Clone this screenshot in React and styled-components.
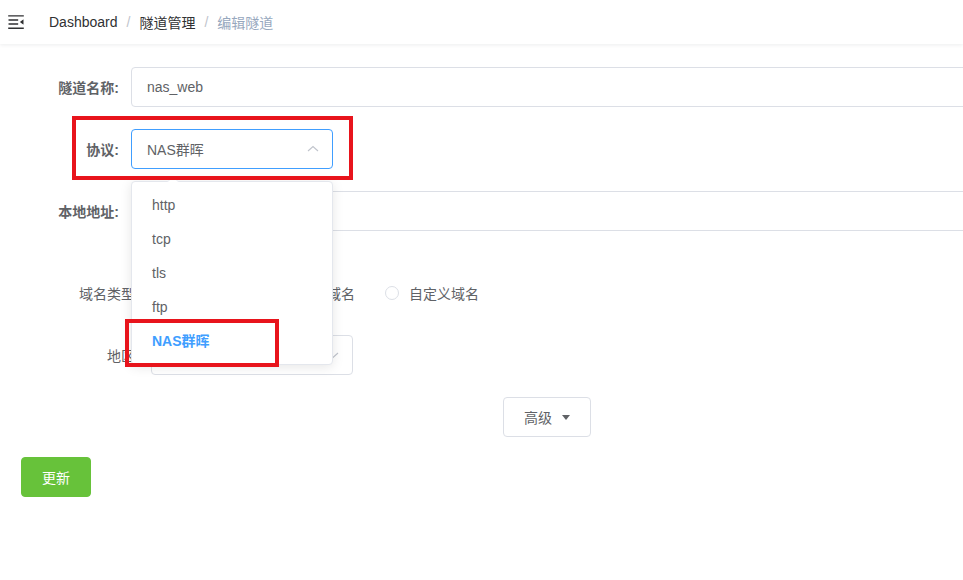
import React from 'react'
import styled, { createGlobalStyle } from 'styled-components'

const GlobalStyle = createGlobalStyle`
  html, body {
    margin: 0;
    padding: 0;
    background: #fff;
    overflow: hidden;
  }
  body {
    font-family: "Liberation Sans", "Noto Sans CJK SC", sans-serif;
    font-size: 14px;
    color: #606266;
  }
`

const Page = styled.div`
  position: relative;
  width: 963px;
  height: 580px;
  overflow: hidden;
`

const Navbar = styled.div`
  height: 44px;
  display: flex;
  align-items: center;
  background: #fff;
  box-shadow: 0 1px 4px rgba(0, 21, 41, 0.08);
`

const Hamburger = styled.svg`
  width: 20px;
  height: 20px;
  margin-left: 6px;
  transform: rotate(180deg);
`

const Breadcrumb = styled.div`
  display: flex;
  align-items: center;
  margin-left: 23px;
  font-size: 14px;
`

const Crumb = styled.span`
  color: ${p => (p.$last ? '#97a8be' : '#303133')};
`

const Sep = styled.span`
  margin: 0 9px;
  color: #c0c4cc;
`

const Form = styled.div`
  padding: 23px 0 0 11px;
`

const Item = styled.div`
  display: flex;
  align-items: center;
  height: 40px;
  margin-bottom: ${p => p.$mb ?? 22}px;
  margin-top: ${p => p.$mt ?? 0}px;
`

const Label = styled.label`
  width: ${p => p.$w ?? 120}px;
  box-sizing: border-box;
  padding-right: 12px;
  text-align: right;
  color: #606266;
  font-weight: ${p => (p.$plain ? 400 : 700)};
  flex-shrink: 0;
`

const Input = styled.div`
  box-sizing: border-box;
  height: 40px;
  width: ${p => p.$w ?? 860}px;
  flex-shrink: 0;
  border: 1px solid ${p => (p.$focus ? '#409eff' : '#dcdfe6')};
  border-radius: 4px;
  padding: 0 15px;
  display: flex;
  align-items: center;
  justify-content: space-between;
  color: #606266;
  background: #fff;
`

const SelectWrap = styled.div`
  position: relative;
`

const Chevron = styled.svg`
  width: 12px;
  height: 12px;
  margin-right: -2px;
`

const Dropdown = styled.ul`
  position: absolute;
  left: 0;
  top: 52px;
  width: 202px;
  box-sizing: border-box;
  margin: 0;
  padding: 6px 0;
  list-style: none;
  background: #fff;
  border: 1px solid #e4e7ed;
  border-radius: 4px;
  box-shadow: 0 2px 12px rgba(0, 0, 0, 0.1);
  z-index: 10;

  &::before {
    content: '';
    position: absolute;
    top: -6px;
    left: 35px;
    border: 6px solid transparent;
    border-top: 0;
    border-bottom-color: #ebeef5;
  }
  &::after {
    content: '';
    position: absolute;
    top: -5px;
    left: 36px;
    border: 5px solid transparent;
    border-top: 0;
    border-bottom-color: #fff;
  }
`

const Option = styled.li`
  height: 34px;
  line-height: 34px;
  padding: 0 20px;
  color: ${p => (p.$selected ? '#409eff' : '#606266')};
  font-weight: ${p => (p.$selected ? 700 : 400)};
`

const RadioGroup = styled.div`
  display: flex;
  align-items: center;
`

const Radio = styled.span`
  display: flex;
  align-items: center;
  margin-right: 30px;
  color: #606266;

  &::before {
    content: '';
    box-sizing: border-box;
    width: 14px;
    height: 14px;
    border-radius: 50%;
    border: ${p => (p.$checked ? '4px solid #409eff' : '1px solid #dcdfe6')};
    margin-right: 10px;
  }
`

const Center = styled.div`
  width: 832px;
  margin-left: 120px;
  display: flex;
  justify-content: center;
  margin-bottom: 20px;
`

const Button = styled.button`
  box-sizing: border-box;
  height: 40px;
  padding: 0 20px;
  border-radius: 4px;
  font-family: inherit;
  font-size: 14px;
  display: flex;
  align-items: center;
  gap: 6px;
  border: 1px solid ${p => (p.$primary ? '#67c23a' : '#dcdfe6')};
  background: ${p => (p.$primary ? '#67c23a' : '#fff')};
  color: ${p => (p.$primary ? '#fff' : '#606266')};
`

const Caret = styled.span`
  width: 0;
  height: 0;
  border-left: 4px solid transparent;
  border-right: 4px solid transparent;
  border-top: 5px solid #606266;
  margin-left: 4px;
`

const Actions = styled.div`
  padding-left: 10px;
`

const Mark = styled.div`
  position: absolute;
  left: ${p => p.$x}px;
  top: ${p => p.$y}px;
  width: ${p => p.$w}px;
  height: ${p => p.$h}px;
  box-sizing: border-box;
  border: 4px solid #e8141c;
  z-index: 20;
  pointer-events: none;
`

const options = ['http', 'tcp', 'tls', 'ftp', 'NAS群晖']

export default function App() {
  return (
    <Page>
      <GlobalStyle />
      <Navbar>
        <Hamburger viewBox="0 0 1024 1024">
          <path
            fill="#303133"
            d="M408 442h480c4.4 0 8-3.6 8-8v-56c0-4.4-3.6-8-8-8H408c-4.4 0-8 3.6-8 8v56c0 4.4 3.6 8 8 8zm-8 204c0 4.4 3.6 8 8 8h480c4.4 0 8-3.6 8-8v-56c0-4.4-3.6-8-8-8H408c-4.4 0-8 3.6-8 8v56zm504-486H120c-4.4 0-8 3.6-8 8v56c0 4.4 3.6 8 8 8h784c4.4 0 8-3.6 8-8v-56c0-4.4-3.6-8-8-8zm0 632H120c-4.4 0-8 3.6-8 8v56c0 4.4 3.6 8 8 8h784c4.4 0 8-3.6 8-8v-56c0-4.4-3.6-8-8-8zM142.4 642.1L298.7 519a8.84 8.84 0 0 0 0-13.9L142.4 381.9c-5.8-4.6-14.4-.5-14.4 6.9v246.3a8.8 8.8 0 0 0 14.4 7z"
          />
        </Hamburger>
        <Breadcrumb>
          <Crumb>Dashboard</Crumb>
          <Sep>/</Sep>
          <Crumb>隧道管理</Crumb>
          <Sep>/</Sep>
          <Crumb $last>编辑隧道</Crumb>
        </Breadcrumb>
      </Navbar>

      <Form>
        <Item>
          <Label>隧道名称:</Label>
          <Input>nas_web</Input>
        </Item>
        <Item>
          <Label>协议:</Label>
          <SelectWrap>
            <Input $w={202} $focus>
              NAS群晖
              <Chevron viewBox="0 0 12 12">
                <polyline points="1,8 6,3.5 11,8" fill="none" stroke="#c0c4cc" strokeWidth="1.1" />
              </Chevron>
            </Input>
            <Dropdown>
              {options.map(o => (
                <Option key={o} $selected={o === 'NAS群晖'}>{o}</Option>
              ))}
            </Dropdown>
          </SelectWrap>
        </Item>
        <Item $mb={42}>
          <Label>本地地址:</Label>
          <Input />
        </Item>
        <Item>
          <Label $w={140} $plain>域名类型:</Label>
          <RadioGroup>
            <Radio $checked>随机域名</Radio>
            <Radio>指定子域名</Radio>
            <Radio>自定义域名</Radio>
          </RadioGroup>
        </Item>
        <Item>
          <Label $w={140} $plain>地区:</Label>
          <Input $w={202}>
            <span />
            <Chevron viewBox="0 0 12 12">
              <polyline points="1,4 6,8.5 11,4" fill="none" stroke="#c0c4cc" strokeWidth="1.1" />
            </Chevron>
          </Input>
        </Item>
        <Center>
          <Button>
            高级
            <Caret />
          </Button>
        </Center>
        <Actions>
          <Button $primary>更新</Button>
        </Actions>
      </Form>

      <Mark $x={72} $y={116} $w={281} $h={64} />
      <Mark $x={125} $y={319} $w={154} $h={48} />
    </Page>
  )
}
